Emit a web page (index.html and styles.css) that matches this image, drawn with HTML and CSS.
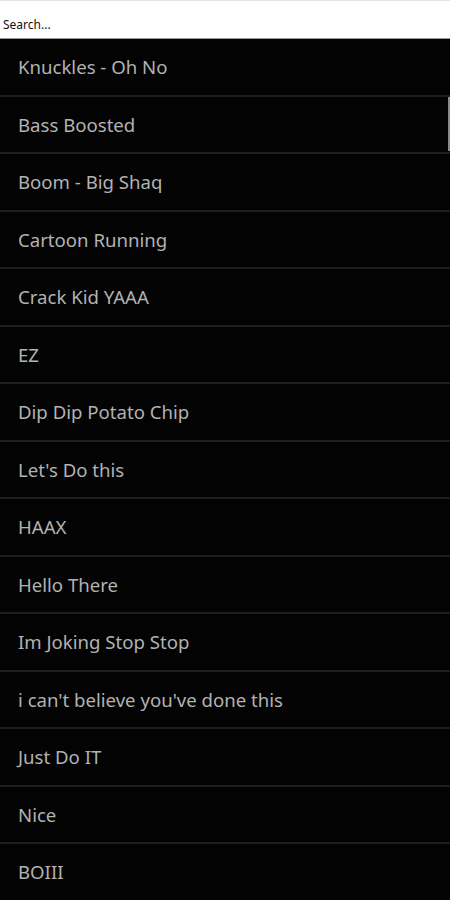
FILE: index.html
```html
<!DOCTYPE html>
<html lang="en">
<head>
  <meta charset="UTF-8">
  <meta name="viewport" content="width=device-width, initial-scale=1.0">
  <title>Soundboard</title>
  <link rel="stylesheet" href="styles.css">
</head>
<body>
  <div class="search">
    <input type="text" class="search-input" placeholder="Search...">
  </div>
  <div class="list-wrap">
    <ul class="sounds">
      <li>Knuckles - Oh No</li>
      <li>Bass Boosted</li>
      <li>Boom - Big Shaq</li>
      <li>Cartoon Running</li>
      <li>Crack Kid YAAA</li>
      <li>EZ</li>
      <li>Dip Dip Potato Chip</li>
      <li>Let's Do this</li>
      <li>HAAX</li>
      <li>Hello There</li>
      <li>Im Joking Stop Stop</li>
      <li>i can't believe you've done this</li>
      <li>Just Do IT</li>
      <li>Nice</li>
      <li>BOIII</li>
    </ul>
    <div class="scroll-thumb"></div>
  </div>
</body>
</html>
```

FILE: styles.css
```css
body {
  margin: 0;
  background-color: #000;
  font-family: 'Noto Sans', sans-serif;
  overflow: hidden;
}
.search {
  height: 37px;
  background-color: #fff;
  border-top: 1px solid #e4e4e4;
  border-bottom: 1px solid #9a9a9a;
  display: flex;
  align-items: flex-end;
}
.search-input {
  width: 100%;
  border: none;
  outline: none;
  padding: 0 3px 5px;
  font-family: 'Noto Sans', sans-serif;
  font-size: 12px;
  color: #111;
  background: transparent;
}
.search-input::placeholder {
  color: #111;
}
.list-wrap {
  position: relative;
}
.sounds {
  list-style: none;
  margin: 0;
  padding: 0;
}
.sounds li {
  height: 55.5px;
  display: flex;
  align-items: center;
  padding-left: 18px;
  border-bottom: 2px solid #1e1e1e;
  color: #b2b2b2;
  font-size: 18.6px;
  background-color: #030303;
}
.scroll-thumb {
  position: absolute;
  right: 0;
  top: 58px;
  width: 2px;
  height: 54px;
  background-color: #8a8a8a;
}
```
